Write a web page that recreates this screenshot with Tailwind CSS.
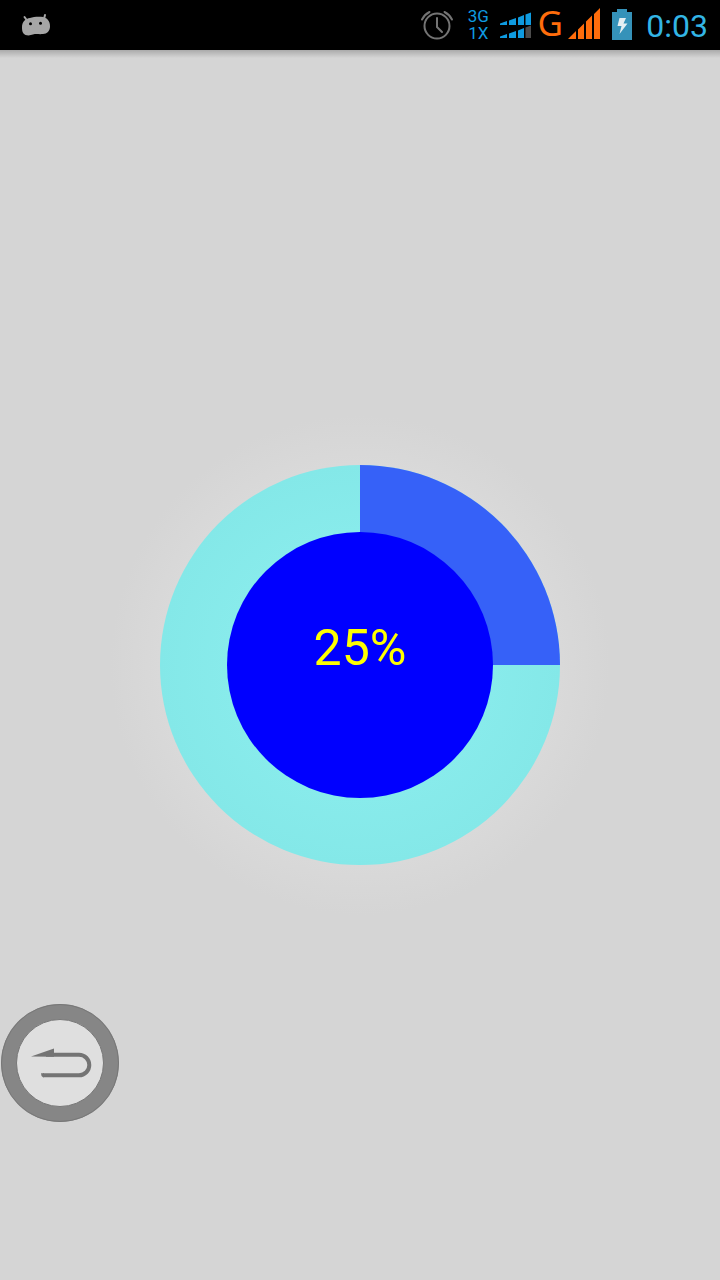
<!DOCTYPE html>
<html lang="en">
<head>
<meta charset="utf-8">
<meta name="viewport" content="width=device-width, initial-scale=1">
<title>Progress</title>
<script src="https://cdn.jsdelivr.net/npm/@tailwindcss/browser@4"></script>
</head>
<body class="relative flex min-h-screen flex-col bg-[#d5d5d5] font-['Roboto',sans-serif]">
  <header class="flex h-[50px] items-center bg-black pr-3 pl-5">
    <svg class="h-[50px] w-8" viewBox="20 0 32 50" aria-label="Android">
      <path d="M24.500 17L27 20.500M45 15L44 19" stroke="#a6a6a6" stroke-width="2" stroke-linecap="round"/>
      <path d="M22 27C22 22 25.500 18.500 30 18C33 17 37 16.500 41 16.800C47 17 50.300 21.500 50 26.500C50 31 47 34 43 34C39 34.500 36 33.500 33 34.600C29 36 25 35.500 23.500 33.500C22 31.500 22 29 22 27Z" fill="#a6a6a6"/>
      <circle cx="30.500" cy="23.700" r="1.500" fill="#000"/><circle cx="40.500" cy="23.200" r="1.500" fill="#000"/>
    </svg>
    <div class="ml-auto flex items-center">
      <svg class="h-[50px] w-9" viewBox="420 0 36 50" fill="none" stroke="#747474" stroke-width="2" stroke-linecap="round" aria-label="Alarm set">
        <circle cx="437" cy="26" r="12.500"/>
        <path d="M437 18V27L442 32M422 19.500Q424.500 14.500 429.500 12M452 19.500Q449.500 14.500 444.500 12"/>
      </svg>
      <div class="ml-3 flex w-5 flex-col items-center text-[17px] leading-[17px] text-[#0f9be0]">
        <div>3G</div><div>1X</div>
      </div>
      <svg class="ml-3 h-[50px] w-9" viewBox="500 0 36 50" fill="#0f9be0" aria-label="Mobile signal">
        <path d="M500 23.500L507 21V25H500ZM509 20.500L516 18V25H509ZM518 17.500L524 15V25H518ZM525.500 14.500L531 12.500V25H525.500ZM500 36.500L507 34V38H500ZM509 33.500L516 31V38H509ZM518 30.500L524 28V38H518Z"/>
        <path d="M525.500 27.500L531 25.500V38H525.500Z" fill="#4c4c4c"/>
      </svg>
      <span class="w-7 pb-1 text-center font-['Noto_Sans',sans-serif] text-[35px] leading-[46px] text-[#ff6d0c]">G</span>
      <svg class="ml-1 h-[50px] w-8" viewBox="568 0 32 50" fill="#ff6d0c" aria-label="Data signal">
        <path d="M568 39L576 31V39ZM578 29.500L584 23.500V39H578ZM586 21.500L592 15.500V39H586ZM594 14L600 8V39H594Z"/>
      </svg>
      <svg class="ml-3 h-[50px] w-5" viewBox="612 0 20 50" aria-label="Battery charging">
        <path d="M617 9H627V12H632V40H612V12H617Z" fill="#3592b9"/>
        <path d="M619.500 18H626L623.500 23.500H627.500L619.500 34L621.500 26H617.500Z" fill="#e4eef2"/>
      </svg>
      <time class="ml-[14px] pt-[2px] text-[32px] leading-[48px] text-[#33b5e5]">0:03</time>
    </div>
  </header>

  <main class="flex flex-1 flex-col bg-[radial-gradient(circle_at_center,#e0e0e0_0px,#d9d9d9_200px,#d5d5d5_250px)]">
    <div class="h-2 bg-linear-to-b from-black/20 to-transparent"></div>
    <div class="flex flex-1 items-center justify-center pb-2">
      <div class="grid size-[400px] place-items-center" role="progressbar" aria-valuenow="25" aria-valuemin="0" aria-valuemax="100" aria-label="Progress">
        <svg class="col-start-1 row-start-1 size-full" viewBox="0 0 400 400">
          <defs>
            <radialGradient id="ring"><stop offset=".66" stop-color="#88ebeb"/><stop offset="1" stop-color="#84e8e8"/></radialGradient>
          </defs>
          <circle cx="200" cy="200" r="200" fill="url(#ring)"/>
          <path d="M200 200V0A200 200 0 0 1 400 200Z" fill="#3661f8"/>
          <circle cx="200" cy="200" r="133" fill="#0000ff"/>
        </svg>
        <span class="col-start-1 row-start-1 pb-[34px] text-[50px] leading-[50px] text-[#ffff00]">25%</span>
      </div>
    </div>
  </main>

  <button type="button" aria-label="Back" class="absolute bottom-[157px] left-0 size-[120px]">
    <svg class="size-full" viewBox="0 0 120 120">
      <circle cx="60" cy="60" r="59" fill="#868686"/>
      <circle cx="60" cy="60" r="58.500" fill="none" stroke="#787878"/>
      <circle cx="60" cy="60" r="43.500" fill="#dfdfdf" stroke="#787878"/>
      <path d="M43 72.300H79A10.300 10.300 0 0 0 79 51.700H46" fill="none" stroke="#747474" stroke-width="4"/>
      <path d="M31 53.500L54 45.500V53.700ZM41 70.300H44V74.300H43Q41 73.500 41 70.300Z" fill="#747474"/>
    </svg>
  </button>
</body>
</html>
